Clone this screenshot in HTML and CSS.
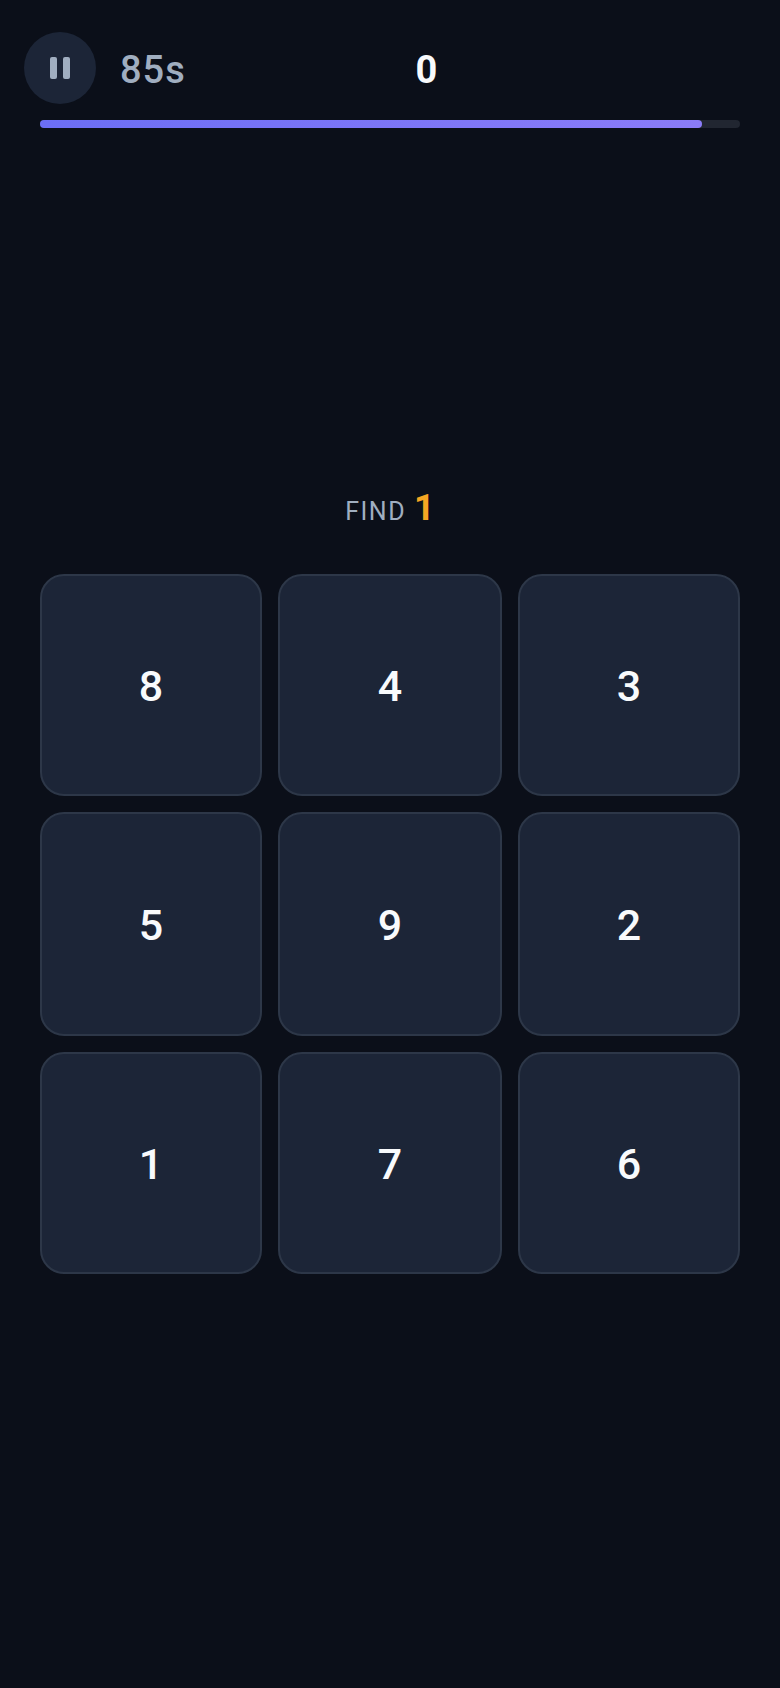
FILE: index.html
```html
<!DOCTYPE html>
<html lang="en">
<head>
    <meta charset="UTF-8">
    <meta name="viewport" content="width=device-width, initial-scale=1.0">
    <title>Find the Number</title>
    <link rel="stylesheet" href="styles.css">
</head>
<body>
    <div class="header">
        <div class="header-left">
            <button class="pause-btn" aria-label="Pause">
                <span class="pause-bar"></span>
                <span class="pause-bar"></span>
            </button>
            <span class="timer">85s</span>
        </div>
        <span class="score">0</span>
        <div class="header-spacer"></div>
    </div>

    <div class="progress">
        <div class="progress-fill" style="width: 94.6%"></div>
    </div>

    <div class="prompt">
        <span class="prompt-label">FIND</span>
        <span class="prompt-target">1</span>
    </div>

    <div class="grid">
        <button class="cell">8</button>
        <button class="cell">4</button>
        <button class="cell">3</button>
        <button class="cell">5</button>
        <button class="cell">9</button>
        <button class="cell">2</button>
        <button class="cell">1</button>
        <button class="cell">7</button>
        <button class="cell">6</button>
    </div>
</body>
</html>
```

FILE: styles.css
```css
* {
    box-sizing: border-box;
}
body {
    margin: 0;
    height: 1688px;
    background: #0b0f19;
    color: #f8fafc;
    font-family: Roboto, "Liberation Sans", sans-serif;
    overflow: hidden;
}
.header {
    display: flex;
    align-items: center;
    justify-content: space-between;
    padding: 32px 24px 0;
}
.header-left {
    display: flex;
    align-items: center;
    gap: 24px;
}
.header-spacer {
    width: 89px;
}
.pause-btn {
    display: flex;
    align-items: center;
    justify-content: center;
    gap: 6px;
    width: 72px;
    height: 72px;
    padding: 0;
    border: none;
    border-radius: 50%;
    background: #1c2537;
}
.pause-bar {
    width: 7px;
    height: 22px;
    border-radius: 2px;
    background: #a0aec0;
}
.timer {
    padding-top: 3px;
    font-size: 38px;
    font-weight: 500;
    letter-spacing: 1px;
    color: #a0aec0;
}
.score {
    padding-top: 3px;
    font-size: 38px;
    font-weight: 700;
}
.progress {
    height: 8px;
    margin: 16px 40px 0;
    border-radius: 4px;
    background: #212631;
}
.progress-fill {
    height: 100%;
    border-radius: 4px;
    background: linear-gradient(90deg, #6c6ef5, #8b7cf8);
}
.prompt {
    display: flex;
    align-items: baseline;
    justify-content: center;
    gap: 8px;
    margin-top: 359px;
    height: 47px;
}
.prompt-label {
    font-size: 25px;
    letter-spacing: 1.5px;
    color: #a0aec0;
}
.prompt-target {
    font-size: 36px;
    font-weight: 700;
    color: #f5a623;
}
.grid {
    display: grid;
    grid-template-columns: 222px 224px 222px;
    grid-template-rows: 222px 224px 222px;
    gap: 16px;
    margin: 40px 40px 0;
}
.cell {
    padding: 2px 0 0;
    border: 2px solid #2d3748;
    border-radius: 24px;
    background: #1c2537;
    color: #f8fafc;
    font-family: inherit;
    font-size: 43px;
    font-weight: 500;
}
```
